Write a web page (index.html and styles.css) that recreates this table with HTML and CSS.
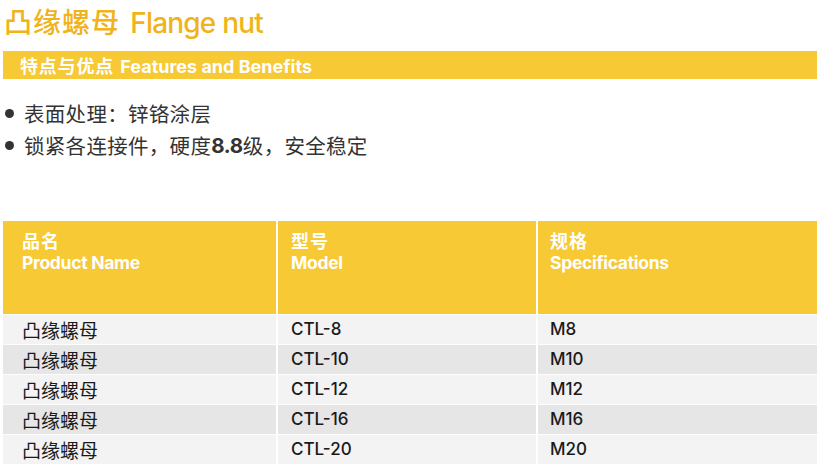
FILE: index.html
```html
<!DOCTYPE html>
<html lang="zh">
<head>
<meta charset="utf-8">
<link rel="stylesheet" href="styles.css">
</head>
<body>
<div class="page">
  <h1 class="title"><span class="cn">凸缘螺母</span> <span class="en">Flange nut</span></h1>
  <div class="bar"><span class="cn">特点与优点</span> <span class="en">Features and Benefits</span></div>
  <ul class="features">
    <li>表面处理：锌铬涂层</li>
    <li>锁紧各连接件，硬度<b class="num">8.8</b>级，安全稳定</li>
  </ul>
  <table class="spec">
    <colgroup>
      <col class="c1"><col class="c2"><col class="c3">
    </colgroup>
    <thead>
      <tr>
        <th><span class="cn">品名</span><span class="en">Product Name</span></th>
        <th><span class="cn">型号</span><span class="en">Model</span></th>
        <th><span class="cn">规格</span><span class="en">Specifications</span></th>
      </tr>
    </thead>
    <tbody>
      <tr><td class="cn">凸缘螺母</td><td>CTL-8</td><td>M8</td></tr>
      <tr><td class="cn">凸缘螺母</td><td>CTL-10</td><td>M10</td></tr>
      <tr><td class="cn">凸缘螺母</td><td>CTL-12</td><td>M12</td></tr>
      <tr><td class="cn">凸缘螺母</td><td>CTL-16</td><td>M16</td></tr>
      <tr><td class="cn">凸缘螺母</td><td>CTL-20</td><td>M20</td></tr>
    </tbody>
  </table>
</div>
</body>
</html>
```

FILE: styles.css
```css
html, body {
  margin: 0;
  padding: 0;
  background: #ffffff;
}
body {
  font-family: Inter, "Noto Sans", "Noto Sans CJK SC", sans-serif;
  color: #222222;
}
.page {
  width: 820px;
  padding-top: 5px;
}
.title {
  margin: 0;
  padding-left: 4px;
  height: 32px;
  line-height: 32px;
  font-weight: 500;
  font-size: 27px;
  color: #f0b31a;
  white-space: nowrap;
}
.title .cn {
  font-family: "Noto Sans CJK SC", sans-serif;
  font-size: 28px;
  letter-spacing: 1px;
}
.title .en {
  font-family: Inter, "Noto Sans", sans-serif;
  letter-spacing: -0.8px;
  font-size: 28px;
  margin-left: 3px;
}
.bar {
  margin: 14px 3px 0 3px;
  height: 28px;
  line-height: 28px;
  background: #f6c935;
  color: #ffffff;
  font-weight: 700;
  padding-left: 17px;
  font-size: 18px;
  white-space: nowrap;
}
.bar .cn {
  font-family: "Noto Sans CJK SC", sans-serif;
  font-size: 18px;
  letter-spacing: 0.8px;
}
.bar .en {
  letter-spacing: 0;
  margin-left: 2px;
}
.features {
  margin: 18px 0 0 0;
  padding: 0 0 0 5px;
  list-style: none;
  font-family: "Noto Sans CJK SC", sans-serif;
  font-size: 20.5px;
  letter-spacing: 0.3px;
  color: #333333;
}
.features li {
  display: flex;
  align-items: center;
  height: 32px;
}
.features li::before {
  content: "";
  width: 9px;
  height: 9px;
  border-radius: 50%;
  background: #333333;
  margin-right: 10px;
  flex: none;
}
.features .num {
  font-family: Inter, sans-serif;
  font-weight: 700;
  letter-spacing: -0.3px;
}
.spec {
  margin: 60px 3px 0 3px;
  width: 814px;
  border-collapse: collapse;
  table-layout: fixed;
}
.c1 { width: 274px; }
.c2 { width: 260px; }
.c3 { width: 280px; }
.spec th {
  background: #f6c935;
  color: #ffffff;
  text-align: left;
  vertical-align: top;
  height: 93px;
  padding: 7px 0 0 19px;
  box-sizing: border-box;
  font-weight: 700;
  border-left: 2px solid #ffffff;
}
.spec th:nth-child(2) { padding-left: 13px; }
.spec th:nth-child(3) { padding-left: 12px; }
.spec th:first-child, .spec td:first-child { border-left: none; }
.spec th .cn {
  display: block;
  font-family: "Noto Sans CJK SC", sans-serif;
  font-size: 18px;
  line-height: 24px;
  letter-spacing: 1px;
}
.spec th .en {
  display: block;
  font-size: 17.5px;
  line-height: 21px;
  letter-spacing: -0.3px;
}
.spec td {
  height: 30px;
  padding: 0 0 0 19px;
  box-sizing: border-box;
  font-size: 17px;
  font-weight: 500;
  color: #1a1a1a;
  border-left: 2px solid #ffffff;
  border-top: 1px solid #fdfdfd;
  background: #f3f3f3;
}
.spec td:nth-child(2) { padding-left: 13px; }
.spec td:nth-child(3) { padding-left: 12px; }
.spec tbody tr:nth-child(even) td { background: #e6e6e6; }
.spec td.cn {
  font-family: "Noto Sans CJK SC", sans-serif;
  font-size: 19px;
  font-weight: 400;
}
```
